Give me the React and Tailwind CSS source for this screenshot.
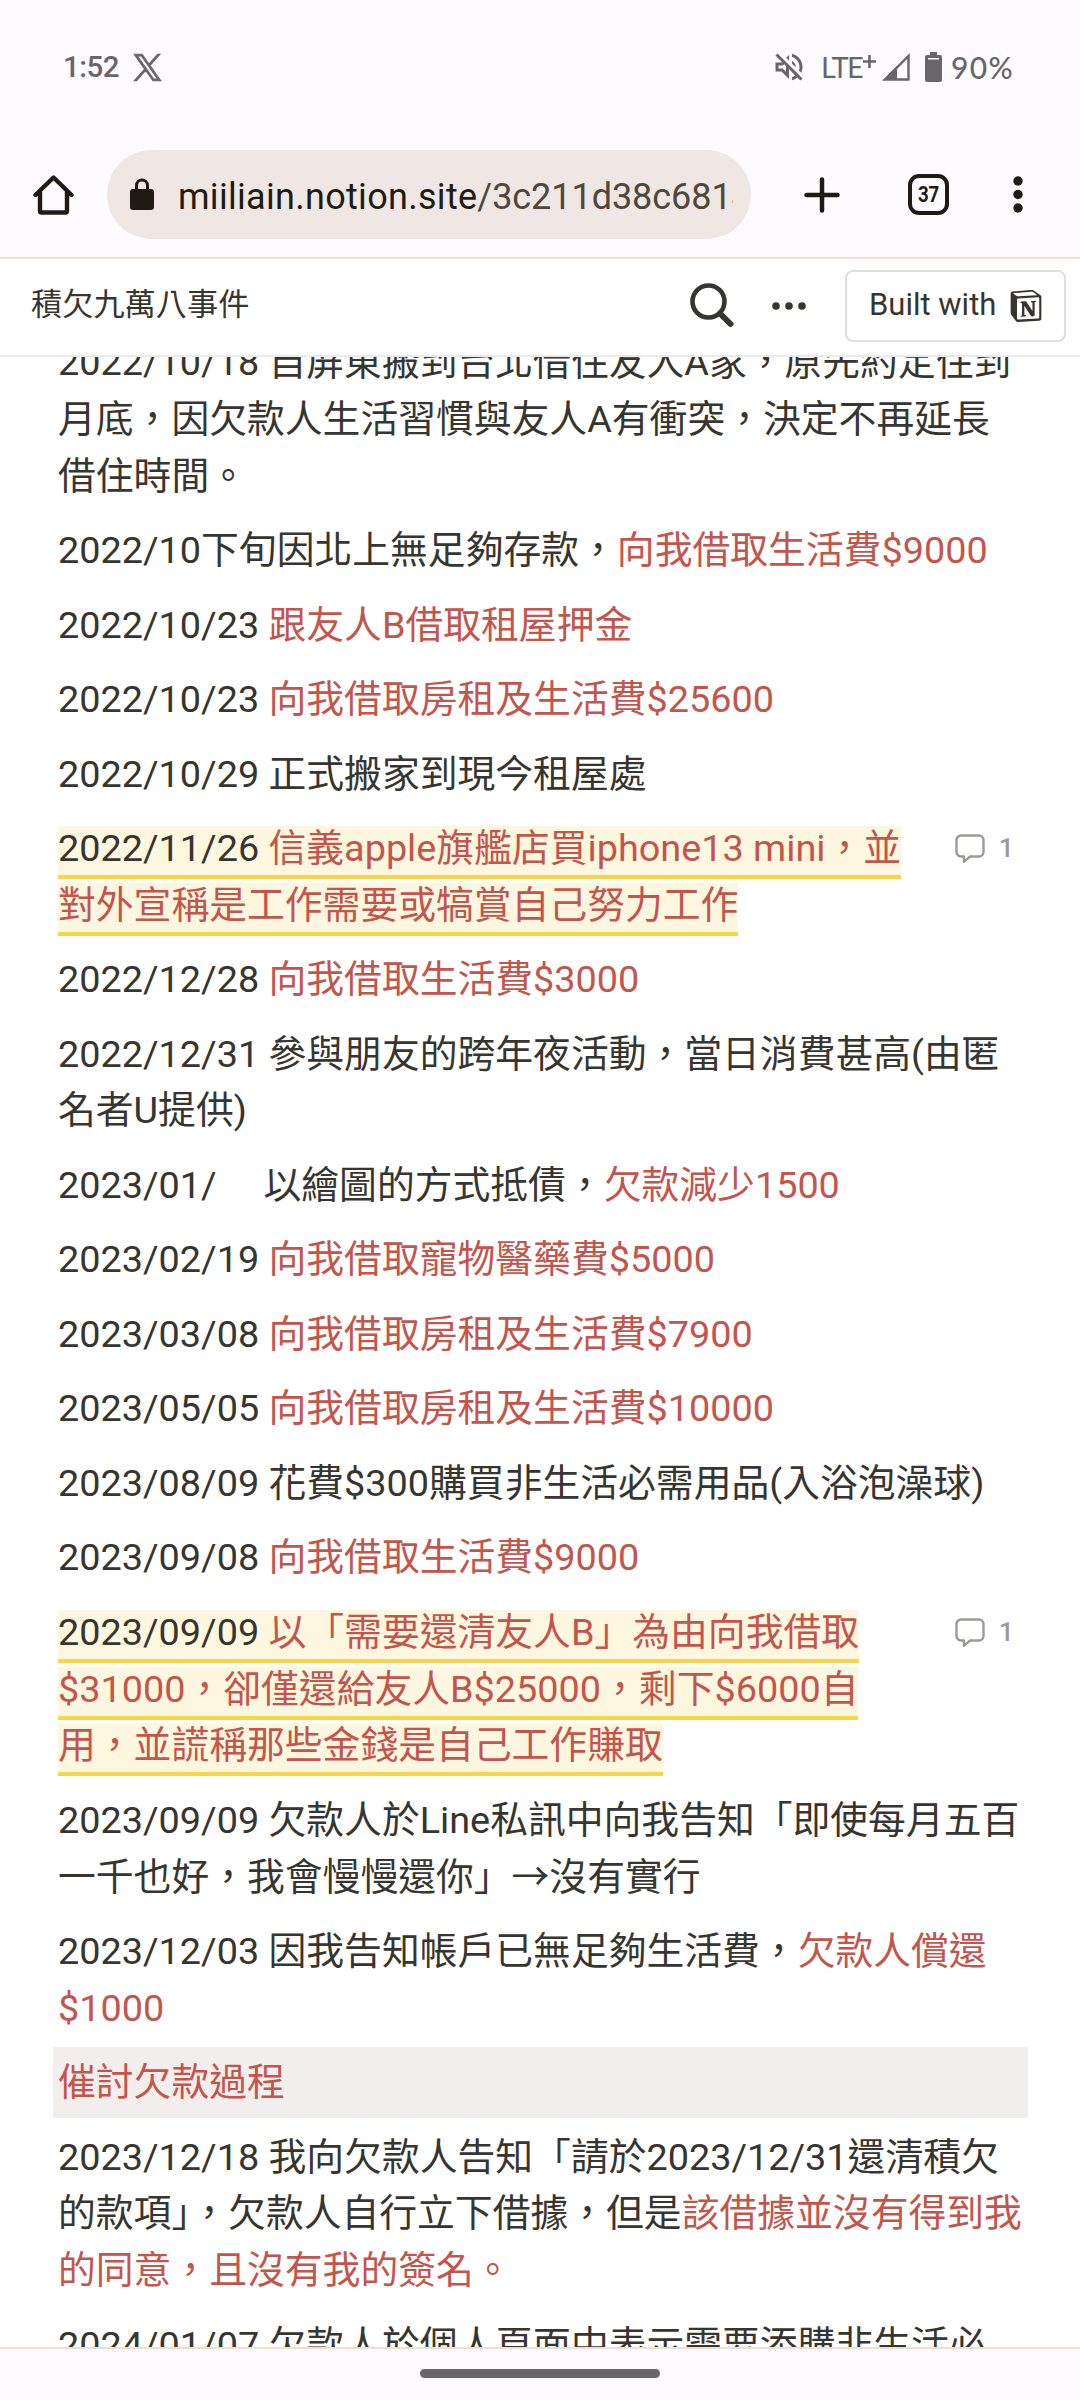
import React from "react";
import { SiNotion } from "react-icons/si";
import { MdOutlineVolumeOff } from "react-icons/md";

const entries = [
  { lines: [["2022/10/18 自屏東搬到台北借住友人A家，原先約定住到"], ["月底，因欠款人生活習慣與友人A有衝突，決定不再延長"], ["借住時間。"]] },
  { lines: [["2022/10下旬因北上無足夠存款，", "向我借取生活費$9000"]] },
  { lines: [["2022/10/23 ", "跟友人B借取租屋押金"]] },
  { lines: [["2022/10/23 ", "向我借取房租及生活費$25600"]] },
  { lines: [["2022/10/29 正式搬家到現今租屋處"]] },
  { lines: [["2022/11/26 ", "信義apple旗艦店買iphone13 mini，並"], ["", "對外宣稱是工作需要或犒賞自己努力工作"]], comments: 1 },
  { lines: [["2022/12/28 ", "向我借取生活費$3000"]] },
  { lines: [["2022/12/31 參與朋友的跨年夜活動，當日消費甚高(由匿"], ["名者U提供)"]] },
  { lines: [["2023/01/\u00a0\u00a0\u00a0\u00a0\u00a0以繪圖的方式抵債，", "欠款減少1500"]] },
  { lines: [["2023/02/19 ", "向我借取寵物醫藥費$5000"]] },
  { lines: [["2023/03/08 ", "向我借取房租及生活費$7900"]] },
  { lines: [["2023/05/05 ", "向我借取房租及生活費$10000"]] },
  { lines: [["2023/08/09 花費$300購買非生活必需用品(入浴泡澡球)"]] },
  { lines: [["2023/09/08 ", "向我借取生活費$9000"]] },
  { lines: [["2023/09/09 ", "以「需要還清友人B」為由向我借取"], ["", "$31000，卻僅還給友人B$25000，剩下$6000自"], ["", "用，並謊稱那些金錢是自己工作賺取"]], comments: 1 },
  { lines: [["2023/09/09 欠款人於Line私訊中向我告知「即使每月五百"], ["一千也好，我會慢慢還你」→沒有實行"]] },
  { lines: [["2023/12/03 因我告知帳戶已無足夠生活費，", "欠款人償還"], ["", "$1000"]] },
  { lines: [["", "催討欠款過程"]], heading: true },
  { lines: [["2023/12/18 我向欠款人告知「請於2023/12/31還清積欠"], ["的款項」，欠款人自行立下借據，但是", "該借據並沒有得到我"], ["", "的同意，且沒有我的簽名。"]] },
  { lines: [["2024/01/07 欠款人於個人頁面中表示需要添購非生活必"]] },
];

function StatusBar() {
  return (
    <div className="flex h-[150px] shrink-0 items-start justify-between pl-[63px] pr-[65px] pt-[48px] font-['Lato'] text-[30px] font-medium leading-[38px] text-[#69666a]">
      <div className="flex items-center">
        <span className="w-[70px] font-['Roboto'] text-[29.500px] tracking-[-0.500px]">1:52</span>
        <svg className="size-[29px]" viewBox="0 0 24 24" fill="currentColor">
          <path d="M14.1 10.3 22.3 1h-2l-7.1 8.1L7.600 1H1l8.600 12.300L1 23h2l7.500-8.600 6 8.600H23zM3.700 2.500h3.200l13.400 19h-3.200z" stroke="currentColor" strokeWidth="0.9" />
        </svg>
      </div>
      <div className="flex items-center">
        <MdOutlineVolumeOff className="mr-[14px] size-[36px]" />
        <span className="w-[42px] text-[29px] font-normal tracking-[-1.700px]">LTE</span>
        <svg className="mb-[12px] mr-[6px] size-[13px]" viewBox="0 0 14 14" stroke="currentColor" strokeWidth="2.800">
          <path d="M7 0v14M0 7h14" />
        </svg>
        <svg className="mr-[15px] h-[28px] w-[28px]" viewBox="0 0 28 28">
          <path d="M26.500 3v23.500H3z" fill="none" stroke="currentColor" strokeWidth="2.400" />
          <path d="M15 13v14H1z" fill="currentColor" />
        </svg>
        <svg className="mr-[9px] h-[30px] w-[17px]" viewBox="0 0 17 30" fill="currentColor">
          <path d="M5 0h7v3h3a2 2 0 0 1 2 2v23a2 2 0 0 1-2 2H2a2 2 0 0 1-2-2V5a2 2 0 0 1 2-2h3z" />
          <path d="M3 6h11v1.500H3z" fill="#fdfbff" />
        </svg>
        <span className="w-[64px] whitespace-nowrap tracking-[1.300px]">90%</span>
      </div>
    </div>
  );
}

function BrowserBar() {
  return (
    <div className="flex h-[109px] shrink-0 items-start border-b-2 border-[#eee0d0] text-[#1f1b13]">
      <svg className="ml-[33px] mt-[24px] h-[42px] w-[41px]" viewBox="0 0 41 42" fill="none" stroke="currentColor" strokeWidth="4.400">
        <path d="M2.500 21 20.500 3.500 38.500 21" strokeLinejoin="round" strokeLinecap="round" />
        <path d="M7 18v19a1.500 1.500 0 0 0 1.500 1.500h24a1.500 1.500 0 0 0 1.500-1.500V18" />
      </svg>
      <div className="ml-[33px] flex h-[89px] w-[644px] items-center rounded-full bg-[#efe7e3] pl-[23px] pr-[18px]">
        <svg className="mb-[1px] mr-[24px] h-[32px] w-[24px] shrink-0" viewBox="0 0 24 32">
          <rect y="11" width="24" height="21" rx="3" fill="currentColor" />
          <path d="M6.500 12V7.500a5.500 5.500 0 0 1 11 0V12" fill="none" stroke="currentColor" strokeWidth="3" />
        </svg>
        <span className="overflow-hidden whitespace-nowrap pt-[4px] text-[36px] tracking-[0.300px]">
          miiliain.notion.site<span className="tracking-[-0.050px] text-[#50463a]">/3c211d38c6814</span>
        </span>
      </div>
      <svg className="ml-[53px] mt-[27px] size-[36px]" viewBox="0 0 36 36" stroke="currentColor" strokeWidth="4.500" strokeLinecap="round">
        <path d="M18 2.500v31M2.500 18h31" />
      </svg>
      <div className="ml-[68px] mt-[24px] flex size-[41px] items-center justify-center rounded-[11px] border-4 border-[#1f1b13] text-[22px] font-bold leading-none">
        <span className="scale-x-85">37</span>
      </div>
      <svg className="ml-[64px] mt-[26px] h-[37px] w-[10px]" viewBox="0 0 10 37" fill="currentColor">
        <circle cx="5" cy="5" r="4.700" />
        <circle cx="5" cy="18.500" r="4.700" />
        <circle cx="5" cy="32" r="4.700" />
      </svg>
    </div>
  );
}

function PageHeader() {
  return (
    <div className="flex h-[98px] shrink-0 items-center border-b-2 border-[#ebebeb] bg-white pb-[3px] pl-[31px] pr-[14px]">
      <div className="flex-1 text-[31.200px]">積欠九萬八事件</div>
      <svg className="mr-[38px] h-[45px] w-[44px]" viewBox="0 0 44 45" fill="none" stroke="currentColor" strokeWidth="4.600">
        <circle cx="18.500" cy="18.500" r="16" />
        <path d="M30 30.500 40.500 41" strokeWidth="6" strokeLinecap="round" />
      </svg>
      <svg className="mr-[39px] h-[8px] w-[34px]" viewBox="0 0 34 8" fill="currentColor">
        <circle cx="4" cy="4" r="3.800" />
        <circle cx="17" cy="4" r="3.800" />
        <circle cx="30" cy="4" r="3.800" />
      </svg>
      <div className="flex h-[72px] w-[221px] items-center rounded-[8px] border-2 border-[#dededd] pl-[22px] text-[31px]">
        <span className="w-[141px] whitespace-nowrap">Built with</span>
        <SiNotion className="mt-px size-[32px]" />
      </div>
    </div>
  );
}

function CommentCount({ count }) {
  return (
    <div className="flex h-[57px] items-center pr-[4px] text-[26px] font-medium text-[#9b9a97]">
      <svg className="mr-[14px] h-[29px] w-[30px]" viewBox="0 0 30 29" fill="none" stroke="currentColor" strokeWidth="2.400" strokeLinejoin="round">
        <path d="M6 1.500h18a4.500 4.500 0 0 1 4.500 4.500v12a4.500 4.500 0 0 1-4.500 4.500h-9L9 27.800v-5.300H6A4.500 4.500 0 0 1 1.500 18V6A4.500 4.500 0 0 1 6 1.500z" />
      </svg>
      <span className="w-[20px]">{count}</span>
    </div>
  );
}

function Entry({ lines, comments, heading }) {
  const text = lines.map(([plain, red], i) => (
    <React.Fragment key={i}>
      {i > 0 && <br />}
      {plain}
      {red && <span className="text-[#c4554d]">{red}</span>}
    </React.Fragment>
  ));

  return (
    <div className={`ml-[53px] mr-[52px] mb-[3.620px] flex justify-between whitespace-nowrap px-[5px] py-[7.100px] ${heading ? "bg-[#f2eeed]" : ""}`}>
      <p>
        {comments ? <span className="border-b-4 border-[#f8d548] bg-[#fef7df] pb-[5px]">{text}</span> : text}
      </p>
      {comments && <CommentCount count={comments} />}
    </div>
  );
}

export default function App() {
  return (
    <div className="flex h-[2400px] w-[1080px] flex-col overflow-hidden bg-[#fdfbff] font-['Roboto','Noto_Sans_CJK_TC',sans-serif] text-[#37352f]">
      <StatusBar />
      <BrowserBar />
      <PageHeader />
      <main className="min-h-0 flex-1 overflow-hidden bg-white">
        <div className="-mt-[30px] text-[37.800px] leading-[56.700px]">
          {entries.map((entry, i) => (
            <Entry key={i} {...entry} />
          ))}
        </div>
      </main>
      <footer className="flex h-[53px] shrink-0 justify-center border-t-2 border-[#eee0d0] pt-[20px]">
        <div className="h-[9px] w-[240px] rounded-full bg-[#69666a]" />
      </footer>
    </div>
  );
}
